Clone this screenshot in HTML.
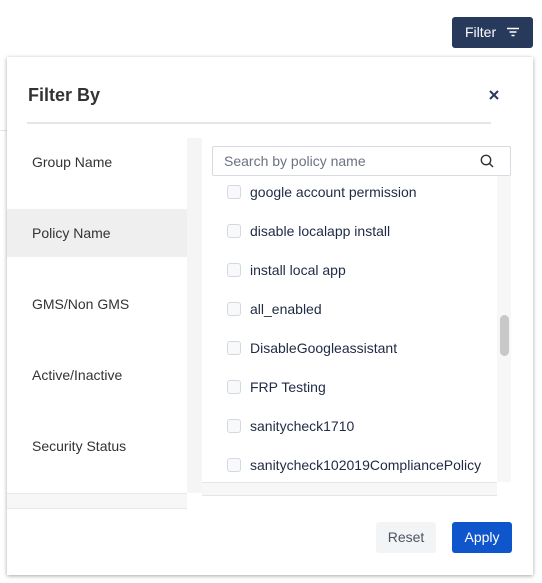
<!DOCTYPE html>
<html><head><style>
body{margin:0;width:542px;height:583px;background:#fff;font-family:"Liberation Sans",sans-serif;position:relative;overflow:hidden;color:#2b3440}
.a{position:absolute}
.btn{left:452px;top:17px;width:81px;height:31px;background:#283a5b;border-radius:3px;color:#fff;font-size:14px;line-height:31px;box-sizing:border-box;padding-left:13px}
.pop{left:7px;top:57px;width:526px;height:518px;background:#fff;box-shadow:0 1px 4px rgba(0,0,0,.35)}
.left div{position:absolute;left:25px;font-size:14px;color:#333}
.row{position:absolute;left:227px;font-size:14px;color:#1f2a44;height:20px;line-height:20px}
.row span.cb{position:absolute;left:0;top:3px;width:12px;height:12px;border:1px solid #d5d8de;border-radius:3px;background:#f8f9fb}
.row span.t{position:absolute;left:23px;white-space:nowrap}
</style></head><body>
<div class="a" style="left:0;top:130px;width:7px;height:1px;background:#e8e8e8"></div>
<div class="a btn">Filter
<svg class="a" style="left:55px;top:10px" width="12" height="10"><path d="M0 1.5H12M2.5 5H9.5M4.5 8.5H7.5" stroke="#fff" stroke-width="1.4"/></svg></div>
<div class="a pop">
 <div class="a" style="left:21px;top:28px;font-size:18px;font-weight:bold;color:#333">Filter By</div>
 <svg class="a" style="left:482px;top:33px" width="10" height="10"><path d="M1 1L9 9M9 1L1 9" stroke="#283a5b" stroke-width="2"/></svg>
 <div class="a" style="left:20px;top:65px;width:464px;height:2px;background:#e3e5e9"></div>
 <div class="a" style="left:0;top:152px;width:180px;height:48px;background:#efefef"></div>
 <div class="a" style="left:180px;top:81px;width:15px;height:355px;background:#f5f5f5"></div>
 <div class="a" style="left:0;top:436px;width:180px;height:14px;background:#f7f7f7;border-top:1px solid #e8e8e8;border-bottom:1px solid #e8e8e8"></div>
 <div class="a" style="left:195px;top:425px;width:295px;height:12px;background:#f7f7f7;border-top:1px solid #e5e5e5;border-bottom:1px solid #e5e5e5"></div>
 <div class="a" style="left:490px;top:119px;width:14px;height:306px;background:#f7f7f7"></div>
 <div class="a" style="left:493px;top:258px;width:9px;height:41px;background:#c8c8c8;border-radius:5px"></div>
 <div class="left">
  <div style="top:97px">Group Name</div>
  <div style="top:168px">Policy Name</div>
  <div style="top:239px">GMS/Non GMS</div>
  <div style="top:310px">Active/Inactive</div>
  <div style="top:381px">Security Status</div>
 </div>
 <div class="a" style="left:205px;top:89px;width:297px;height:28px;border:1px solid #d7dae0;border-radius:2px;background:#fff">
  <div class="a" style="left:11px;top:6px;font-size:14px;color:#6b7280">Search by policy name</div>
  <svg class="a" style="left:267px;top:7px" width="14" height="14"><circle cx="6" cy="6" r="4.7" fill="none" stroke="#333" stroke-width="1.4"/><path d="M9.5 9.5L13 13" stroke="#333" stroke-width="1.4"/></svg>
 </div>
</div>
<div class="row" style="top:182px"><span class="cb"></span><span class="t">google account permission</span></div>
<div class="row" style="top:221px"><span class="cb"></span><span class="t">disable localapp install</span></div>
<div class="row" style="top:260px"><span class="cb"></span><span class="t">install local app</span></div>
<div class="row" style="top:299px"><span class="cb"></span><span class="t">all_enabled</span></div>
<div class="row" style="top:338px"><span class="cb"></span><span class="t">DisableGoogleassistant</span></div>
<div class="row" style="top:377px"><span class="cb"></span><span class="t">FRP Testing</span></div>
<div class="row" style="top:416px"><span class="cb"></span><span class="t">sanitycheck1710</span></div>
<div class="row" style="top:455px"><span class="cb"></span><span class="t">sanitycheck102019CompliancePolicy</span></div>
<div class="a" style="left:376px;top:522px;width:60px;height:31px;background:#f3f4f6;border-radius:3px;font-size:14px;line-height:31px;text-align:center;color:#4b5563">Reset</div>
<div class="a" style="left:452px;top:522px;width:60px;height:31px;background:#0f55cc;border-radius:3px;font-size:14px;line-height:31px;text-align:center;color:#fff">Apply</div>
</body></html>
